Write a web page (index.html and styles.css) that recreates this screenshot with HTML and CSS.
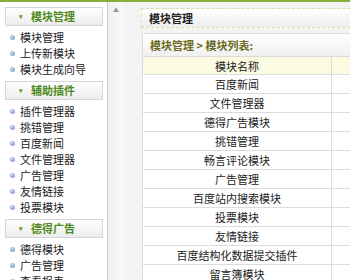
FILE: index.html
```html
<!DOCTYPE html>
<html lang="zh-CN">
<head>
    <meta charset="UTF-8">
    <title>模块管理</title>
    <link rel="stylesheet" href="styles.css">
</head>
<body>
    <div class="topbar"></div>
    <div class="frame">
        <div class="sidebar">
            <div class="menu-head"><span class="arrow">&#9662;</span>模块管理</div>
            <ul class="menu">
                <li>模块管理</li>
                <li>上传新模块</li>
                <li>模块生成向导</li>
            </ul>
            <div class="menu-head"><span class="arrow">&#9662;</span>辅助插件</div>
            <ul class="menu">
                <li>插件管理器</li>
                <li>挑错管理</li>
                <li>百度新闻</li>
                <li>文件管理器</li>
                <li>广告管理</li>
                <li>友情链接</li>
                <li>投票模块</li>
            </ul>
            <div class="menu-head"><span class="arrow">&#9662;</span>德得广告</div>
            <ul class="menu">
                <li>德得模块</li>
                <li>广告管理</li>
                <li>查看报表</li>
            </ul>
        </div>
        <div class="splitter"><span class="up">&#9650;</span></div>
        <div class="main">
            <div class="title-box">模块管理</div>
            <div class="panel">
                <div class="crumb">模块管理 &gt; 模块列表:</div>
                <table class="list">
                    <tr><th>模块名称</th><th></th></tr>
                    <tr><td>百度新闻</td><td></td></tr>
                    <tr><td>文件管理器</td><td></td></tr>
                    <tr><td>德得广告模块</td><td></td></tr>
                    <tr><td>挑错管理</td><td></td></tr>
                    <tr><td>畅言评论模块</td><td></td></tr>
                    <tr><td>广告管理</td><td></td></tr>
                    <tr><td>百度站内搜索模块</td><td></td></tr>
                    <tr><td>投票模块</td><td></td></tr>
                    <tr><td>友情链接</td><td></td></tr>
                    <tr><td>百度结构化数据提交插件</td><td></td></tr>
                    <tr><td>留言簿模块</td><td></td></tr>
                </table>
            </div>
        </div>
    </div>
</body>
</html>
```

FILE: styles.css
```css
body {
    margin: 0;
    font-family: "Noto Sans CJK SC", "Liberation Sans", sans-serif;
    font-size: 12px;
    color: #333;
    background: #fff;
    overflow: hidden;
}
.topbar {
    height: 2px;
    background-color: #8aae3c;
}
.frame {
    display: flex;
    height: 278px;
}
.sidebar {
    flex: none;
    width: 108px;
    border-right: 1px solid #c9c9c9;
    padding-top: 5px;
    box-sizing: border-box;
}
.menu-head {
    margin: 0 4px 0 5px;
    height: 17px;
    line-height: 17px;
    border: 1px solid #d6d6d6;
    background: linear-gradient(#ffffff, #ececec);
    color: #4f8a1c;
    font-weight: bold;
    font-size: 11px;
    padding-left: 13px;
}
.arrow {
    display: inline-block;
    width: 12px;
    font-size: 7px;
    color: #6aa22c;
    vertical-align: top;
}
.menu {
    list-style: none;
    margin: 0;
    padding: 3px 0 4px 0;
}
.menu li {
    height: 16px;
    line-height: 16px;
    padding-left: 20px;
    font-size: 11px;
    color: #222;
    position: relative;
}
.menu li::before {
    content: "";
    position: absolute;
    left: 10px;
    top: 6px;
    width: 5px;
    height: 5px;
    border-radius: 50%;
    background: radial-gradient(circle at 40% 35%, #c9d8f2, #6f8fc6);
}
.splitter {
    flex: none;
    width: 16px;
    background: linear-gradient(90deg, #f0f0f0, #f9f9f9);
    text-align: center;
}
.up {
    display: block;
    margin-top: 3px;
    font-size: 6px;
    color: #999;
}
.main {
    flex: none;
    width: 300px;
    background: #f3f3f3;
    padding: 6px 0 0 17px;
}
.title-box {
    height: 18px;
    line-height: 18px;
    border: 1px dashed #d3e3a4;
    border-right: none;
    background: linear-gradient(#ffffff, #eeeeee);
    font-weight: bold;
    font-size: 11px;
    color: #222;
    padding-left: 7px;
}
.panel {
    margin: 5px 0 0 1px;
    border: 1px solid #dcdcdc;
    border-right: none;
    background: #fff;
}
.crumb {
    height: 22px;
    line-height: 22px;
    padding-left: 7px;
    font-weight: bold;
    font-size: 11px;
    color: #6b6a1e;
    background: linear-gradient(#ffffff, #f0f0f0);
}
.list {
    border-collapse: collapse;
    width: 100%;
}
.list th,
.list td {
    border: 1px solid #dcdcdc;
    border-left: none;
    text-align: center;
    font-size: 11px;
    padding: 0;
    color: #222;
}
.list th {
    height: 17px;
    font-weight: normal;
    background: #fbfbe2;
}
.list td {
    height: 18px;
}
.list th:first-child,
.list td:first-child {
    width: 188px;
}
```
